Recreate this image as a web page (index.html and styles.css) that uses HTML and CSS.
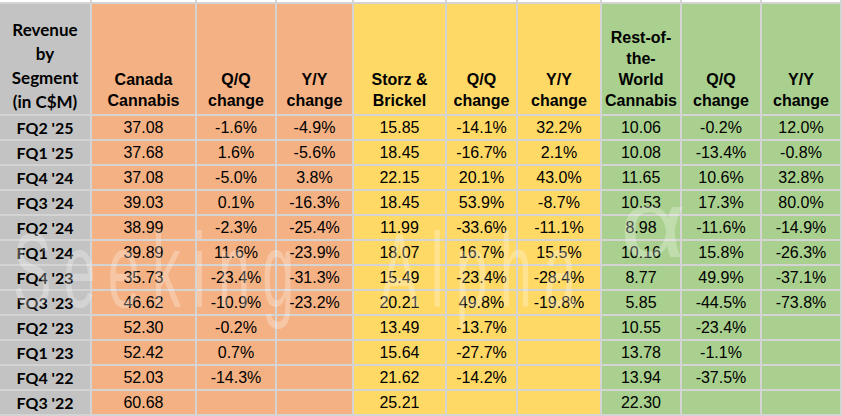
FILE: index.html
```html
<!DOCTYPE html>
<html>
<head>
<meta charset="utf-8">
<link rel="stylesheet" href="styles.css">
</head>
<body>
<div class="wrap">
  <div class="grid">
    <div class="top"></div><div class="top"></div><div class="top"></div><div class="top"></div><div class="top"></div><div class="top"></div><div class="top"></div><div class="top"></div><div class="top"></div><div class="top"></div>

    <div class="hd lbl">Revenue<br>by<br>Segment<br>(in C$M)</div>
    <div class="hd ca">Canada<br>Cannabis</div>
    <div class="hd ca">Q/Q<br>change</div>
    <div class="hd ca">Y/Y<br>change</div>
    <div class="hd sb">Storz &amp;<br>Brickel</div>
    <div class="hd sb">Q/Q<br>change</div>
    <div class="hd sb">Y/Y<br>change</div>
    <div class="hd rw">Rest-of-<br>the-<br>World<br>Cannabis</div>
    <div class="hd rw">Q/Q<br>change</div>
    <div class="hd rw">Y/Y<br>change</div>

    <div class="q">FQ2 '25</div><div class="c ca">37.08</div><div class="c ca">-1.6%</div><div class="c ca">-4.9%</div><div class="c sb">15.85</div><div class="c sb">-14.1%</div><div class="c sb">32.2%</div><div class="c rw">10.06</div><div class="c rw">-0.2%</div><div class="c rw">12.0%</div>
    <div class="q">FQ1 '25</div><div class="c ca">37.68</div><div class="c ca">1.6%</div><div class="c ca">-5.6%</div><div class="c sb">18.45</div><div class="c sb">-16.7%</div><div class="c sb">2.1%</div><div class="c rw">10.08</div><div class="c rw">-13.4%</div><div class="c rw">-0.8%</div>
    <div class="q">FQ4 '24</div><div class="c ca">37.08</div><div class="c ca">-5.0%</div><div class="c ca">3.8%</div><div class="c sb">22.15</div><div class="c sb">20.1%</div><div class="c sb">43.0%</div><div class="c rw">11.65</div><div class="c rw">10.6%</div><div class="c rw">32.8%</div>
    <div class="q">FQ3 '24</div><div class="c ca">39.03</div><div class="c ca">0.1%</div><div class="c ca">-16.3%</div><div class="c sb">18.45</div><div class="c sb">53.9%</div><div class="c sb">-8.7%</div><div class="c rw">10.53</div><div class="c rw">17.3%</div><div class="c rw">80.0%</div>
    <div class="q">FQ2 '24</div><div class="c ca">38.99</div><div class="c ca">-2.3%</div><div class="c ca">-25.4%</div><div class="c sb">11.99</div><div class="c sb">-33.6%</div><div class="c sb">-11.1%</div><div class="c rw">8.98</div><div class="c rw">-11.6%</div><div class="c rw">-14.9%</div>
    <div class="q">FQ1 '24</div><div class="c ca">39.89</div><div class="c ca">11.6%</div><div class="c ca">-23.9%</div><div class="c sb">18.07</div><div class="c sb">16.7%</div><div class="c sb">15.5%</div><div class="c rw">10.16</div><div class="c rw">15.8%</div><div class="c rw">-26.3%</div>
    <div class="q">FQ4 '23</div><div class="c ca">35.73</div><div class="c ca">-23.4%</div><div class="c ca">-31.3%</div><div class="c sb">15.49</div><div class="c sb">-23.4%</div><div class="c sb">-28.4%</div><div class="c rw">8.77</div><div class="c rw">49.9%</div><div class="c rw">-37.1%</div>
    <div class="q">FQ3 '23</div><div class="c ca">46.62</div><div class="c ca">-10.9%</div><div class="c ca">-23.2%</div><div class="c sb">20.21</div><div class="c sb">49.8%</div><div class="c sb">-19.8%</div><div class="c rw">5.85</div><div class="c rw">-44.5%</div><div class="c rw">-73.8%</div>
    <div class="q">FQ2 '23</div><div class="c ca">52.30</div><div class="c ca">-0.2%</div><div class="c ca"></div><div class="c sb">13.49</div><div class="c sb">-13.7%</div><div class="c sb"></div><div class="c rw">10.55</div><div class="c rw">-23.4%</div><div class="c rw"></div>
    <div class="q">FQ1 '23</div><div class="c ca">52.42</div><div class="c ca">0.7%</div><div class="c ca"></div><div class="c sb">15.64</div><div class="c sb">-27.7%</div><div class="c sb"></div><div class="c rw">13.78</div><div class="c rw">-1.1%</div><div class="c rw"></div>
    <div class="q">FQ4 '22</div><div class="c ca">52.03</div><div class="c ca">-14.3%</div><div class="c ca"></div><div class="c sb">21.62</div><div class="c sb">-14.2%</div><div class="c sb"></div><div class="c rw">13.94</div><div class="c rw">-37.5%</div><div class="c rw"></div>
    <div class="q">FQ3 '22</div><div class="c ca">60.68</div><div class="c ca"></div><div class="c ca"></div><div class="c sb">25.21</div><div class="c sb"></div><div class="c sb"></div><div class="c rw">22.30</div><div class="c rw"></div><div class="c rw"></div>
  </div>
  <div class="wm-text"><span class="wm-seeking">Seeking</span><span class="wm-alpha">Alpha</span></div>
  <div class="wm-sym">α</div>
</div>
</body>
</html>
```

FILE: styles.css
```css
html, body {
  margin: 0;
  padding: 0;
  background: #ffffff;
}
.wrap {
  position: relative;
  width: 842px;
  height: 416px;
  overflow: hidden;
}
.grid {
  display: grid;
  grid-template-columns: 90px 103px 78px 75px 91px 69px 82px 78px 78px 78px;
  grid-template-rows: 2px 110px repeat(12, 23px);
  gap: 2px;
  padding: 0 2px 2px 0;
  background: #d4d4d4;
  width: 842px;
  box-sizing: border-box;
  font-family: "Liberation Sans", Arial, sans-serif;
  font-size: 16px;
  color: #000;
}
.top { background: #ffffff; }
.ca { background: #f4b183; }
.sb { background: #ffd966; }
.rw { background: #a9d08e; }
.lbl, .q { background: #c3c3c3; }
.hd {
  display: flex;
  flex-direction: column;
  justify-content: flex-end;
  align-items: center;
  text-align: center;
  font-weight: bold;
  line-height: 21px;
  padding-bottom: 3px;
  box-sizing: border-box;
}
.hd.lbl {
  font-family: Lato, "Open Sans", sans-serif;
  font-weight: bold;
  font-size: 17px;
  line-height: 24px;
  padding-bottom: 0;
}
.q {
  font-family: Lato, "Open Sans", sans-serif;
  font-weight: bold;
  font-size: 16px;
  line-height: 23px;
  text-align: center;
}
.c {
  line-height: 23px;
  text-align: center;
}
.wm-text {
  position: absolute;
  left: 13px;
  top: 218px;
  display: flex;
  gap: 134px;
  font-family: "Liberation Sans", Arial, sans-serif;
  font-size: 105px;
  line-height: 1;
  letter-spacing: 22px;
  white-space: nowrap;
  color: rgba(255, 255, 255, 0.28);
  transform-origin: 0 0;
  transform: scaleX(0.55);
  pointer-events: none;
}
.wm-sym {
  position: absolute;
  left: 620px;
  top: 177px;
  font-family: "Liberation Sans", Arial, sans-serif;
  font-size: 95px;
  line-height: 1;
  color: rgba(255, 255, 255, 0.28);
  transform-origin: 0 0;
  transform: scaleX(1.2);
  pointer-events: none;
}
```
